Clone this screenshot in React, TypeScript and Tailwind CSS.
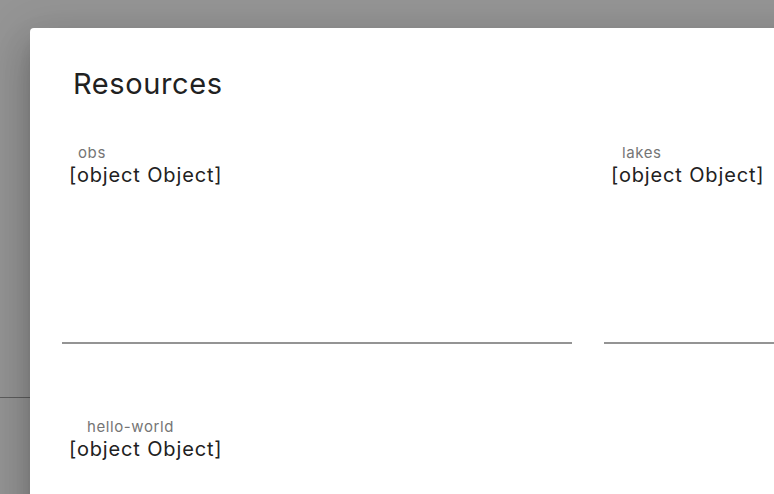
import React from "react";

const fields = [
  { label: "obs", labelPad: "pl-[16px]" },
  { label: "lakes", labelPad: "pl-[18px]" },
  { label: "hello-world", labelPad: "pl-[25px]" },
];

export default function App() {
  return (
    <div
      className="relative w-[774px] h-[494px] overflow-hidden bg-[#959595]"
      style={{ fontFamily: "Inter, 'Noto Sans', sans-serif" }}
    >
      <div className="h-[398px] border-b border-[#5e5e5e]" />
      <div className="absolute left-[30px] top-[28px] w-[1100px] h-[700px] bg-white rounded-[4px] shadow-[0_11px_15px_-7px_rgba(0,0,0,0.2),0_24px_38px_3px_rgba(0,0,0,0.14),0_9px_46px_8px_rgba(0,0,0,0.12)]">
        <h2 className="pt-[41px] pl-[43px] text-[29px] leading-none tracking-[0.6px] font-normal text-[#212121]">
          Resources
        </h2>
        <div className="mt-[47px] pl-[32px] grid grid-cols-[510px_510px] gap-x-[32px] gap-y-[75px]">
          {fields.map((f) => (
            <div
              key={f.label}
              className="h-[199px] flex flex-col border-b-2 border-[#949494]"
            >
              <span
                className={`${f.labelPad} text-[15px] leading-none tracking-[0.6px] text-[#757575]`}
              >
                {f.label}
              </span>
              <span className="mt-[5px] pl-[7px] text-[20px] leading-none tracking-[0.85px] text-[#212121]">
                [object Object]
              </span>
            </div>
          ))}
        </div>
      </div>
    </div>
  );
}
